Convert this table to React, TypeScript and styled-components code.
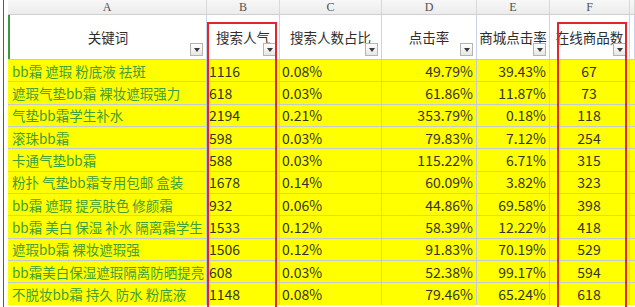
import styled, { createGlobalStyle } from "styled-components";

const GlobalStyle = createGlobalStyle`
  html, body {
    margin: 0;
    padding: 0;
    background: #ffffff;
    overflow: hidden;
  }
`;

const cols = "199px 73px 102px 95px 73px 80px 1fr";

type Align = "left" | "right" | "center";

const columns: { letter: string; title: string; align: Align }[] = [
	{ letter: "A", title: "关键词", align: "left" },
	{ letter: "B", title: "搜索人气", align: "left" },
	{ letter: "C", title: "搜索人数占比", align: "left" },
	{ letter: "D", title: "点击率", align: "right" },
	{ letter: "E", title: "商城点击率", align: "right" },
	{ letter: "F", title: "在线商品数", align: "center" },
];

const rows: string[][] = [
	["bb霜 遮瑕 粉底液 祛斑", "1116", "0.08%", "49.79%", "39.43%", "67"],
	["遮瑕气垫bb霜 裸妆遮瑕强力", "618", "0.03%", "61.86%", "11.87%", "73"],
	["气垫bb霜学生补水", "2194", "0.21%", "353.79%", "0.18%", "118"],
	["滚珠bb霜", "598", "0.03%", "79.83%", "7.12%", "254"],
	["卡通气垫bb霜", "588", "0.03%", "115.22%", "6.71%", "315"],
	["粉扑 气垫bb霜专用包邮 盒装", "1678", "0.14%", "60.09%", "3.82%", "323"],
	["bb霜 遮瑕 提亮肤色 修颜霜", "932", "0.06%", "44.86%", "69.58%", "398"],
	["bb霜 美白 保湿 补水 隔离霜学生", "1533", "0.12%", "58.39%", "12.22%", "418"],
	["遮瑕bb霜 裸妆遮瑕强", "1506", "0.12%", "91.83%", "70.19%", "529"],
	["bb霜美白保湿遮瑕隔离防晒提亮", "608", "0.03%", "52.38%", "99.17%", "594"],
	["不脱妆bb霜 持久 防水 粉底液", "1148", "0.08%", "79.46%", "65.24%", "618"],
];

export default function App() {
	return (
		<>
			<GlobalStyle />
			<Window>
				<Frame>
					<Sheet>
						<LetterRow>
							{columns.map((c) => (
								<Letter key={c.letter}>{c.letter}</Letter>
							))}
							<Letter />
						</LetterRow>
						<HeaderRow>
							{columns.map((c, i) => (
								<HeaderCell key={c.letter} $first={i === 0}>
									{c.title}
									<FilterButton>
										<Arrow />
									</FilterButton>
								</HeaderCell>
							))}
							<HeaderCell />
						</HeaderRow>
						{rows.map((r, ri) => (
							<DataRow key={ri}>
								{r.map((v, ci) => (
									<Cell key={ci} $align={columns[ci].align} $keyword={ci === 0}>
										{v}
									</Cell>
								))}
								<Cell $align="left" />
							</DataRow>
						))}
						<Highlight $left={199} />
						<Highlight $left={549} />
					</Sheet>
				</Frame>
			</Window>
		</>
	);
}

const Window = styled.div`
  width: 635px;
  height: 307px;
  overflow: hidden;
  padding-left: 3px;
  box-sizing: border-box;
  font-family: "Noto Sans CJK SC", "Noto Sans", sans-serif;
`;

const Frame = styled.div`
  height: 100%;
  border-left: 1px solid #5a5a5a;
  padding-left: 4px;
`;

const Sheet = styled.div`
  position: relative;
  height: 100%;
  overflow: hidden;
`;

const LetterRow = styled.div`
  display: grid;
  grid-template-columns: ${cols};
  height: 15px;
  background: linear-gradient(#f7f7f7, #ececec);
  border-bottom: 1px solid #cfcfcf;
  box-sizing: border-box;
`;

const Letter = styled.div`
  font-family: "Liberation Serif", serif;
  font-size: 12px;
  line-height: 14px;
  color: #505050;
  text-align: center;
  border-right: 1px solid #d8d8d8;
`;

const HeaderRow = styled.div`
  display: grid;
  grid-template-columns: ${cols};
  height: 44px;
  background: #ffffff;
`;

const HeaderCell = styled.div<{ $first?: boolean }>`
  position: relative;
  display: flex;
  align-items: center;
  justify-content: center;
  font-size: 13.5px;
  color: #2e2e2e;
  border-right: 1px solid #c9d4ea;
  border-left: ${(p) => (p.$first ? "2px solid #3c9a3c" : "none")};
  white-space: nowrap;
`;

const FilterButton = styled.div`
  position: absolute;
  right: 3px;
  bottom: 3px;
  width: 11px;
  height: 11px;
  border: 1px solid #b4b4b4;
  background: linear-gradient(#ffffff, #e6e6e6);
  display: flex;
  align-items: center;
  justify-content: center;
`;

const Arrow = styled.div`
  width: 0;
  height: 0;
  border-left: 3.5px solid transparent;
  border-right: 3.5px solid transparent;
  border-top: 4px solid #3a3a3a;
  margin-top: 1px;
`;

const DataRow = styled.div`
  display: grid;
  grid-template-columns: ${cols};
  height: 22.35px;
  background: #ffff00;
  border-top: 1px solid #c4c9d8;
  box-sizing: border-box;
`;

const Cell = styled.div<{ $align: Align; $keyword?: boolean }>`
  display: flex;
  align-items: center;
  justify-content: ${(p) =>
		p.$align === "right" ? "flex-end" : p.$align === "center" ? "center" : "flex-start"};
  padding: ${(p) => (p.$keyword ? "0 0 0 4px" : "0 3px 0 2px")};
  font-size: ${(p) => (p.$keyword ? "13.5px" : "14px")};
  color: ${(p) => (p.$keyword ? "#3f9d3a" : "#333322")};
  border-right: 1px solid #c4c9d8;
  white-space: nowrap;
  overflow: hidden;
`;

const Highlight = styled.div<{ $left: number }>`
  position: absolute;
  left: ${(p) => p.$left}px;
  top: 22px;
  width: 70px;
  height: 320px;
  border: 2px solid #e3262b;
  box-sizing: border-box;
  pointer-events: none;
`;
